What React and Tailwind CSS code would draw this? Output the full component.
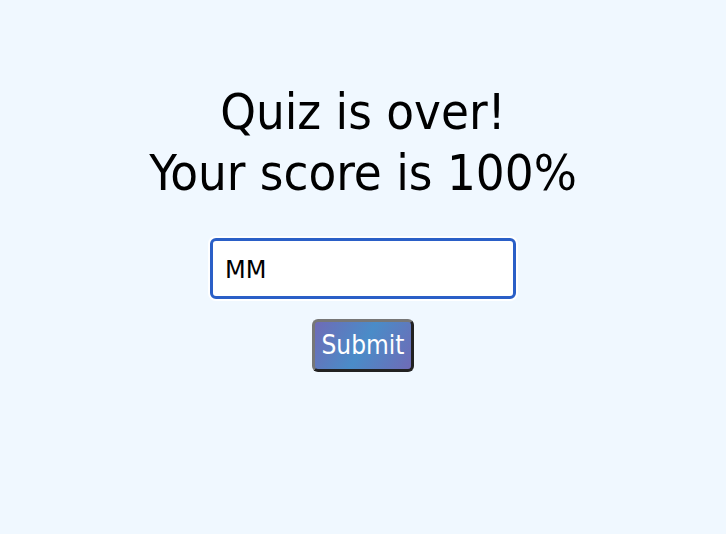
export default function App() {
  return (
    <div className="min-h-[534px] bg-[#f0f8ff] flex flex-col items-center font-['DejaVu_Sans',sans-serif]">
      <h1 className="mt-[81px] text-center font-['DejaVu_Sans_Condensed','DejaVu_Sans',sans-serif] text-[50.5px] leading-[61px] text-black">
        Quiz is over!
        <br />
        Your score is 100%
      </h1>
      <input
        defaultValue="MM"
        className="mt-[35px] w-[306px] h-[61px] bg-white rounded-[6px] border-[3px] border-[#2a5fc7] ring-2 ring-white px-[12px] pt-[3px] text-[24px] text-black outline-none"
      />
      <button className="mt-[20px] w-[102px] h-[53px] rounded-[6px] border-[3px] border-t-[#777] border-l-[#777] border-b-[#222] border-r-[#222] bg-[linear-gradient(120deg,#6f6bb6,#4a8cc8,#6f6bb6)] font-['DejaVu_Sans_Condensed','DejaVu_Sans',sans-serif] text-white text-[26px]">
        Submit
      </button>
    </div>
  );
}
